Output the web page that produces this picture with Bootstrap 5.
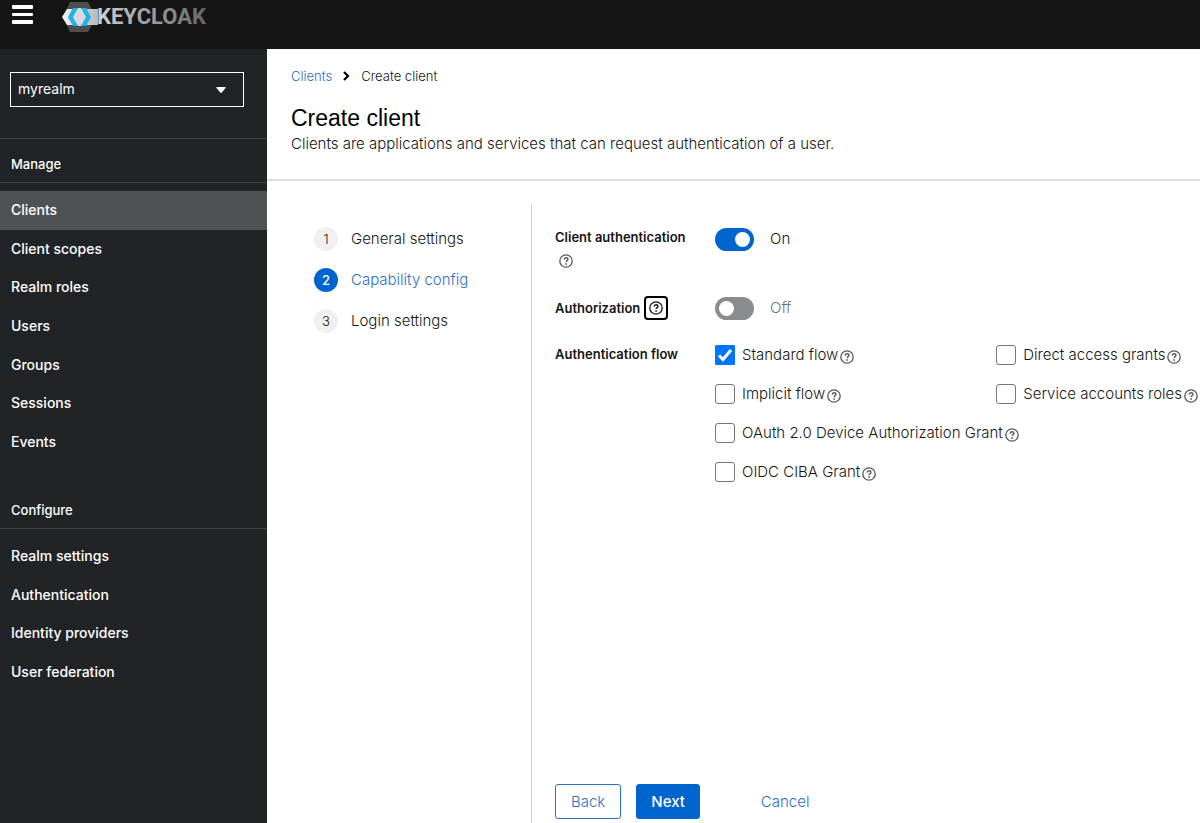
<!DOCTYPE html>
<html lang="en">
<head>
<meta charset="utf-8">
<meta name="viewport" content="width=device-width, initial-scale=1">
<title>Create client - Keycloak</title>
<link href="https://cdn.jsdelivr.net/npm/bootstrap@5.3.0/dist/css/bootstrap.min.css" rel="stylesheet">
<style>
:root { --kc-blue: #0064cf; --kc-link: #2b70c9; --kc-dark: #212427; }
body { font-family: Inter, "Open Sans", sans-serif; font-size: 15px; font-weight: 300; line-height: 22px; color: #151515; background: #fff; }
a { color: var(--kc-link); text-decoration: none; }
.topbar { height: 49px; background: #151515; padding: 0 11px; }
.menu-toggle { width: 22px; height: 30px; }
.brand { margin-left: 29px; height: 34px; }
.sidebar { width: 267px; background: var(--kc-dark); font-size: 14px; font-weight: 500; color: #fff; }
.realm { padding: 23px 23px 31px 10px; border-bottom: 1px solid #3f4347; }
.realm-select { appearance: none; height: 35px; padding: 0 7px 2px; color: #fff; background: var(--kc-dark) url("data:image/svg+xml,%3Csvg xmlns='http://www.w3.org/2000/svg' width='10' height='6'%3E%3Cpath d='M1 0h8q1 0 .5 1L6 5.200q-1 1-2 0L.5 1Q0 0 1 0z' fill='%23fff'/%3E%3C/svg%3E") no-repeat right 17px center; border: 1px solid #fff; border-radius: 0; }
.side-title { font-size: 13px; font-weight: 500; line-height: 20px; margin: 0; padding: 15px 11px 8px; border-bottom: 1px solid #3f4347; }
.side-list { display: grid; grid-auto-rows: 1fr; margin: 8px 0 0; }
.side-manage { min-height: 270px; margin-bottom: 24px; }
.side-configure { min-height: 154px; }
.side-list a { display: flex; align-items: center; height: 100%; padding: 0 11px; color: #fff; }
.side-list a.active { background: #4f5255; }
.page-head { padding: 17px 24px 24px; border-bottom: 2px solid #dedede; }
.crumbs { font-size: 13px; line-height: 20px; }
.page-title { font: 400 23px/28px "Liberation Sans", Arial, sans-serif; color: #000; margin: 18px 0 1px; }
.wizard { margin-top: 23px; }
.steps { width: 265px; padding: 23px 24px 0 47px; border-right: 1px solid #d2d2d2; gap: 17px; }
.steps a { color: #151515; gap: 13px; line-height: 24px; }
.steps a.active { color: var(--kc-link); }
.step-no { width: 24px; height: 24px; border-radius: 50%; background: #f0f0f0; font-size: 13px; text-align: center; }
.active .step-no { background: var(--kc-blue); color: #fff; font-weight: 500; }
.wizard-body { padding: 23px 0 4px 23px; }
.form-line { display: grid; grid-template-columns: 160px 1fr; }
.field-name { font-size: 13px; font-weight: 600; line-height: 20px; }
.help { display: flex; padding: 0; border: 0; background: none; color: #55585b; }
.help-below { margin: 7px 0 0 4px; }
.help-focus { padding: 3px; border: 2px solid #000; border-radius: 4px; color: #151515; }
.toggle { gap: 16px; height: 24px; padding: 0; margin: 0; }
.toggle .form-check-input { width: 39px; height: 23px; margin: 0; float: none; border: 0; background-color: #8a8d90; background-image: url("data:image/svg+xml,%3Csvg xmlns='http://www.w3.org/2000/svg' width='23' height='23'%3E%3Ccircle cx='11.5' cy='11.5' r='7.500' fill='%23fff'/%3E%3C/svg%3E"); background-size: 23px 23px; }
.toggle .form-check-input:checked { background-color: var(--kc-blue); }
.flows { display: grid; grid-template-columns: 58% 1fr; row-gap: 17px; }
.flow { min-height: 22px; white-space: nowrap; }
.flow .form-check-input { width: 20px; height: 20px; margin: 0 7px 0 0; border: 1px solid #767676; border-radius: 3px; }
.flow .form-check-input:checked { background-color: #0075ff; border-color: #0075ff; border-radius: 1px; background-size: 18px 18px; background-image: url("data:image/svg+xml,%3Csvg xmlns='http://www.w3.org/2000/svg' viewBox='0 0 18 18'%3E%3Cpath d='M3 9.500l4 4L15 4' fill='none' stroke='%23fff' stroke-width='3'/%3E%3C/svg%3E"); }
.flow .help { margin: 4px 0 0 2px; }
.wide { grid-column: 1 / -1; }
.wizard-foot { gap: 15px; }
.wizard-foot .btn { height: 35px; padding: 0 15px; border-radius: 3px; font-size: 15px; font-weight: 300; line-height: 22px; }
.wizard-foot .btn-outline-primary { --bs-btn-color: var(--kc-link); --bs-btn-border-color: var(--kc-link); }
.wizard-foot .btn-primary { --bs-btn-color: #fff; --bs-btn-bg: var(--kc-blue); --bs-btn-border-color: var(--kc-blue); font-weight: 500; padding: 0 14px; }
.wizard-foot .btn-link { --bs-btn-color: var(--kc-link); margin-left: 30px; text-decoration: none; }
</style>
</head>
<body>
<svg class="d-none" aria-hidden="true">
  <symbol id="question" viewBox="0 0 14 14">
    <circle cx="7" cy="7" r="6.200" fill="none" stroke="currentColor" stroke-width="1.300"/>
    <path d="M5.100 5.600C5.200 4.300 6 3.700 7.100 3.700c1.100 0 1.900.7 1.900 1.600C9 6.600 7.200 6.600 7.100 8" fill="none" stroke="currentColor" stroke-width="1.400"/>
    <circle cx="7.100" cy="9.900" r=".9" fill="currentColor"/>
  </symbol>
</svg>
<div class="d-flex flex-column min-vh-100">
  <header class="topbar d-flex align-items-start">
    <button class="menu-toggle btn p-0 border-0 d-flex" type="button" aria-label="Global navigation">
      <svg width="22" height="30" viewBox="0 0 22 30" fill="#fff"><rect x="1" y="5" width="21" height="4" rx="1"/><rect x="1" y="13" width="21" height="3" rx="1"/><rect x="1" y="20" width="21" height="4" rx="1"/></svg>
    </button>
    <a class="brand" href="#" aria-label="Keycloak">
      <svg width="150" height="34" viewBox="0 0 150 34">
        <defs>
          <linearGradient id="band" x1="0" x2="1"><stop offset="0" stop-color="#f2f2f2"/><stop offset="1" stop-color="#b9b9b9"/></linearGradient>
          <linearGradient id="word" gradientUnits="userSpaceOnUse" x1="36" y1="0" x2="148" y2="0"><stop offset="0" stop-color="#d0d0d0"/><stop offset="1" stop-color="#636466"/></linearGradient>
        </defs>
        <path d="M8 2h18l8 15-8 15H8L1 17z" fill="#4d4d4d"/>
        <path d="M5 9h31v16H5L0 17z" fill="url(#band)"/>
        <path d="M13 17l3-9h3l5 9-5 9h-3z" fill="#d9d9d9"/>
        <path d="M11 8h5l-5 9 5 9h-5L6 17z" fill="#1db5e8"/>
        <path d="M19 8h5l5 9-5 9h-5l5-9z" fill="#1db5e8"/>
        <text x="35" y="24" font-family="Roboto, sans-serif" font-weight="700" font-size="22" fill="url(#word)">KEYCLOAK</text>
      </svg>
    </a>
  </header>
  <div class="d-flex flex-grow-1">
    <nav class="sidebar flex-shrink-0" aria-label="Main">
      <div class="realm"><select class="realm-select w-100 d-block" aria-label="Realm"><option>myrealm</option></select></div>
      <h2 class="side-title">Manage</h2>
      <ul class="side-list side-manage list-unstyled">
        <li><a class="active" href="#" aria-current="page">Clients</a></li>
        <li><a href="#">Client scopes</a></li>
        <li><a href="#">Realm roles</a></li>
        <li><a href="#">Users</a></li>
        <li><a href="#">Groups</a></li>
        <li><a href="#">Sessions</a></li>
        <li><a href="#">Events</a></li>
      </ul>
      <h2 class="side-title">Configure</h2>
      <ul class="side-list side-configure list-unstyled">
        <li><a href="#">Realm settings</a></li>
        <li><a href="#">Authentication</a></li>
        <li><a href="#">Identity providers</a></li>
        <li><a href="#">User federation</a></li>
      </ul>
    </nav>
    <main class="d-flex flex-column flex-grow-1">
      <section class="page-head">
        <nav class="crumbs d-flex align-items-center" aria-label="Breadcrumb">
          <a href="#">Clients</a>
          <svg class="mx-2" width="13" height="10" viewBox="0 0 13 10"><path d="M4 1l4 4-4 4" fill="none" stroke="#000" stroke-width="2.200"/></svg>
          <span>Create client</span>
        </nav>
        <h1 class="page-title">Create client</h1>
        <p class="mb-0">Clients are applications and services that can request authentication of a user.</p>
      </section>
      <div class="wizard d-flex flex-grow-1">
        <nav class="steps flex-shrink-0 d-flex flex-column" aria-label="Wizard steps">
          <a class="d-flex" href="#"><span class="step-no">1</span>General settings</a>
          <a class="d-flex active" href="#" aria-current="step"><span class="step-no">2</span>Capability config</a>
          <a class="d-flex" href="#"><span class="step-no">3</span>Login settings</a>
        </nav>
        <form class="wizard-body d-flex flex-column flex-grow-1">
          <div class="form-line mb-4 pb-1">
            <div>
              <label class="field-name d-block" for="clientAuth">Client authentication</label>
              <button class="help help-below" type="button" aria-label="Help for client authentication"><svg width="14" height="14"><use href="#question"/></svg></button>
            </div>
            <div class="toggle form-check form-switch d-flex align-items-center">
              <input class="form-check-input" type="checkbox" role="switch" id="clientAuth" checked>
              <label for="clientAuth">On</label>
            </div>
          </div>
          <div class="form-line mb-4">
            <div class="d-flex align-items-center">
              <label class="field-name" for="authz">Authorization</label>
              <button class="help help-focus ms-1" type="button" aria-label="Help for authorization"><svg width="14" height="14"><use href="#question"/></svg></button>
            </div>
            <div class="toggle form-check form-switch d-flex align-items-center">
              <input class="form-check-input" type="checkbox" role="switch" id="authz">
              <label class="text-secondary" for="authz">Off</label>
            </div>
          </div>
          <div class="form-line" role="group" aria-labelledby="flowName">
            <span class="field-name" id="flowName">Authentication flow</span>
            <div class="flows">
              <div class="flow d-flex align-items-center"><input class="form-check-input" type="checkbox" id="f1" checked><label for="f1">Standard flow</label><button class="help" type="button" aria-label="Help"><svg width="14" height="14"><use href="#question"/></svg></button></div>
              <div class="flow d-flex align-items-center"><input class="form-check-input" type="checkbox" id="f2"><label for="f2">Direct access grants</label><button class="help" type="button" aria-label="Help"><svg width="14" height="14"><use href="#question"/></svg></button></div>
              <div class="flow d-flex align-items-center"><input class="form-check-input" type="checkbox" id="f3"><label for="f3">Implicit flow</label><button class="help" type="button" aria-label="Help"><svg width="14" height="14"><use href="#question"/></svg></button></div>
              <div class="flow d-flex align-items-center"><input class="form-check-input" type="checkbox" id="f4"><label for="f4">Service accounts roles</label><button class="help" type="button" aria-label="Help"><svg width="14" height="14"><use href="#question"/></svg></button></div>
              <div class="flow wide d-flex align-items-center"><input class="form-check-input" type="checkbox" id="f5"><label for="f5">OAuth 2.0 Device Authorization Grant</label><button class="help" type="button" aria-label="Help"><svg width="14" height="14"><use href="#question"/></svg></button></div>
              <div class="flow wide d-flex align-items-center"><input class="form-check-input" type="checkbox" id="f6"><label for="f6">OIDC CIBA Grant</label><button class="help" type="button" aria-label="Help"><svg width="14" height="14"><use href="#question"/></svg></button></div>
            </div>
          </div>
          <footer class="wizard-foot d-flex mt-auto">
            <button class="btn btn-outline-primary" type="button">Back</button>
            <button class="btn btn-primary" type="submit">Next</button>
            <button class="btn btn-link" type="button">Cancel</button>
          </footer>
        </form>
      </div>
    </main>
  </div>
</div>
<script src="https://cdn.jsdelivr.net/npm/bootstrap@5.3.0/dist/js/bootstrap.bundle.min.js"></script>
</body>
</html>
